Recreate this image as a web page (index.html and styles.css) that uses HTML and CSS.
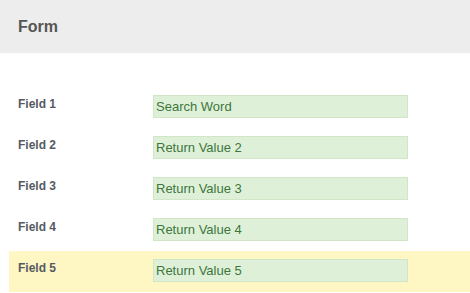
FILE: index.html
```html
<!DOCTYPE html>
<html lang="en">
<head>
  <meta charset="UTF-8">
  <meta name="viewport" content="width=device-width, initial-scale=1.0">
  <title>Form</title>
  <link rel="stylesheet" href="styles.css">
</head>
<body>
  <div class="page-header">
    <h1>Form</h1>
  </div>

  <div class="form-body">
    <div class="form-row">
      <label class="field-label">Field 1</label>
      <div class="field-value">Search Word</div>
    </div>
    <div class="form-row">
      <label class="field-label">Field 2</label>
      <div class="field-value">Return Value 2</div>
    </div>
    <div class="form-row">
      <label class="field-label">Field 3</label>
      <div class="field-value">Return Value 3</div>
    </div>
    <div class="form-row">
      <label class="field-label">Field 4</label>
      <div class="field-value">Return Value 4</div>
    </div>
    <div class="form-row highlight">
      <label class="field-label">Field 5</label>
      <div class="field-value">Return Value 5</div>
    </div>
  </div>
</body>
</html>
```

FILE: styles.css
```css
* {
  margin: 0;
  padding: 0;
  box-sizing: border-box;
}

body {
  font-family: "Liberation Sans", Arial, sans-serif;
  background: #fff;
  color: #555;
}

.page-header {
  background: #ededed;
  height: 53px;
  padding-left: 18px;
}

.page-header h1 {
  font-size: 16px;
  font-weight: bold;
  line-height: 53px;
  color: #555;
}

.form-body {
  padding: 34px 0 0 9px;
}

.form-row {
  display: flex;
  align-items: flex-start;
  height: 41px;
  padding: 8px 0 0 9px;
}

.form-row.highlight {
  background: #fef6c3;
}

.field-label {
  width: 135px;
  padding-top: 2px;
  font-size: 12px;
  font-weight: bold;
  line-height: 14px;
  color: #555a62;
}

.field-value {
  width: 255px;
  height: 23px;
  padding-left: 2px;
  background: #dff0d8;
  border: 1px solid #d0e6c6;
  color: #3c763d;
  font-size: 13px;
  line-height: 21px;
}
```
